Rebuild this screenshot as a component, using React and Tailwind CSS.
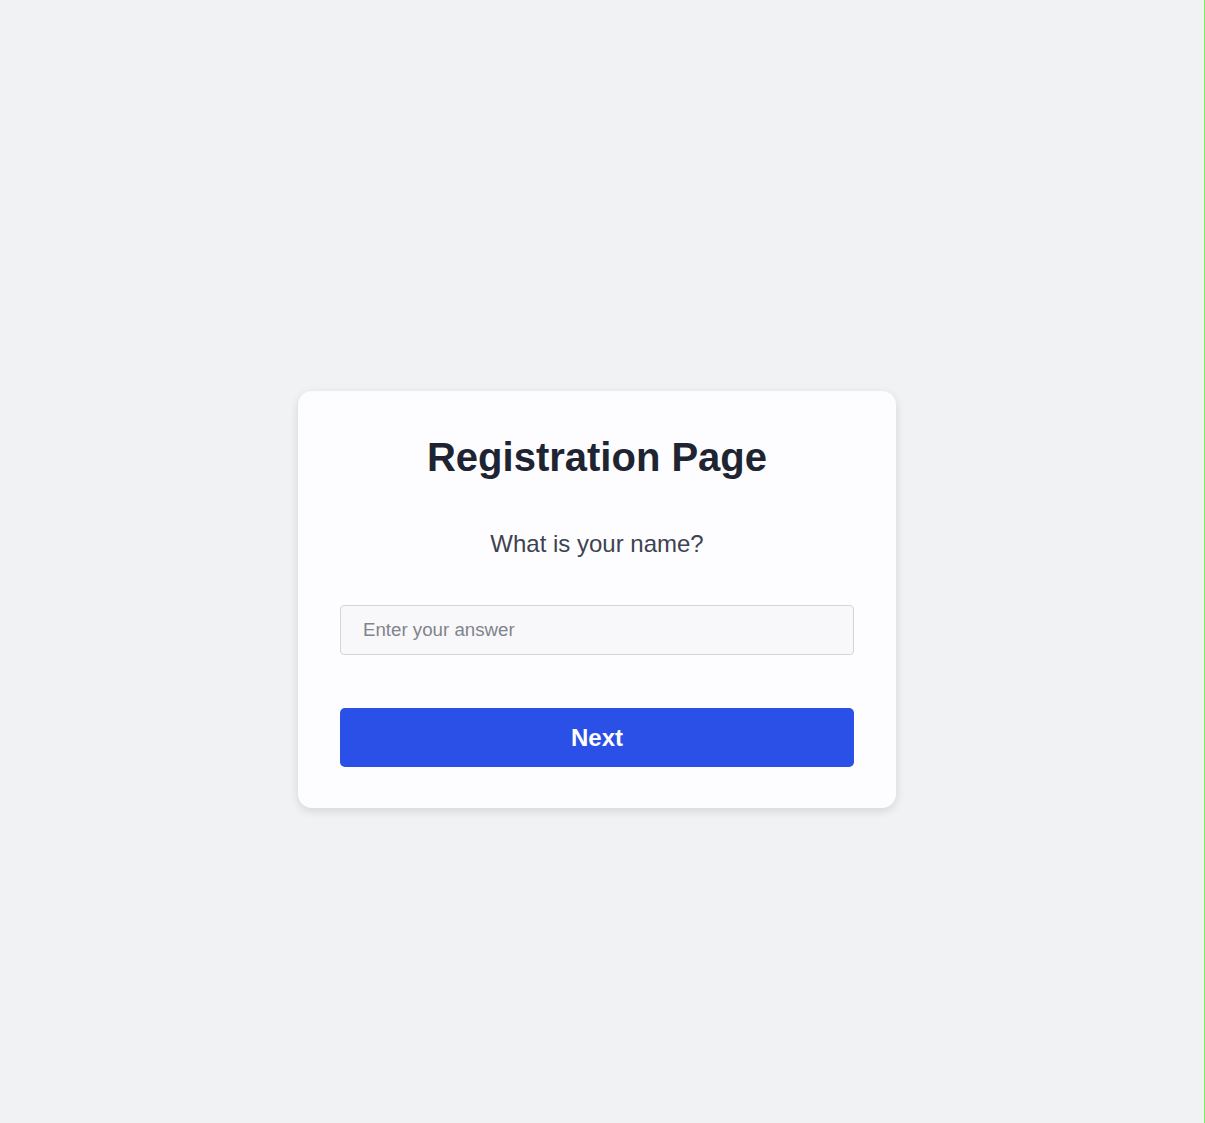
import React, { useState } from 'react';

const App = () => {
  const [answer, setAnswer] = useState('');

  return (
    <div className="min-h-screen w-full bg-[#f1f2f4] border-r border-[#74f25a] flex items-start justify-center pt-[391px] pr-[10px] font-['Liberation_Sans',Arial,sans-serif]">
      {/* Card */}
      <div className="w-[598px] bg-[#fdfdff] rounded-[14px] shadow-[0_3px_10px_rgba(0,0,0,0.12)] px-[42px] pt-[42px] pb-[41px] flex flex-col">
        <h1 className="text-center text-[40px] leading-[48px] font-bold text-[#1e2432]">Registration Page</h1>
        <p className="mt-[47px] text-center text-[24px] leading-[32px] text-[#3d4350]">What is your name?</p>

        <input
          type="text"
          value={answer}
          onChange={(e) => setAnswer(e.target.value)}
          placeholder="Enter your answer"
          className="mt-[45px] h-[50px] w-full rounded-[4px] border border-[#d3d5d9] bg-[#f8f8fa] px-[22px] text-[18.7px] text-[#1e2432] placeholder:text-[#80848b] outline-none"
        />

        <button
          type="button"
          className="mt-[53px] h-[59px] w-full rounded-[5px] bg-[#2b50e8] text-white text-[24px] font-bold"
        >
          Next
        </button>
      </div>
    </div>
  );
};

export default App;
